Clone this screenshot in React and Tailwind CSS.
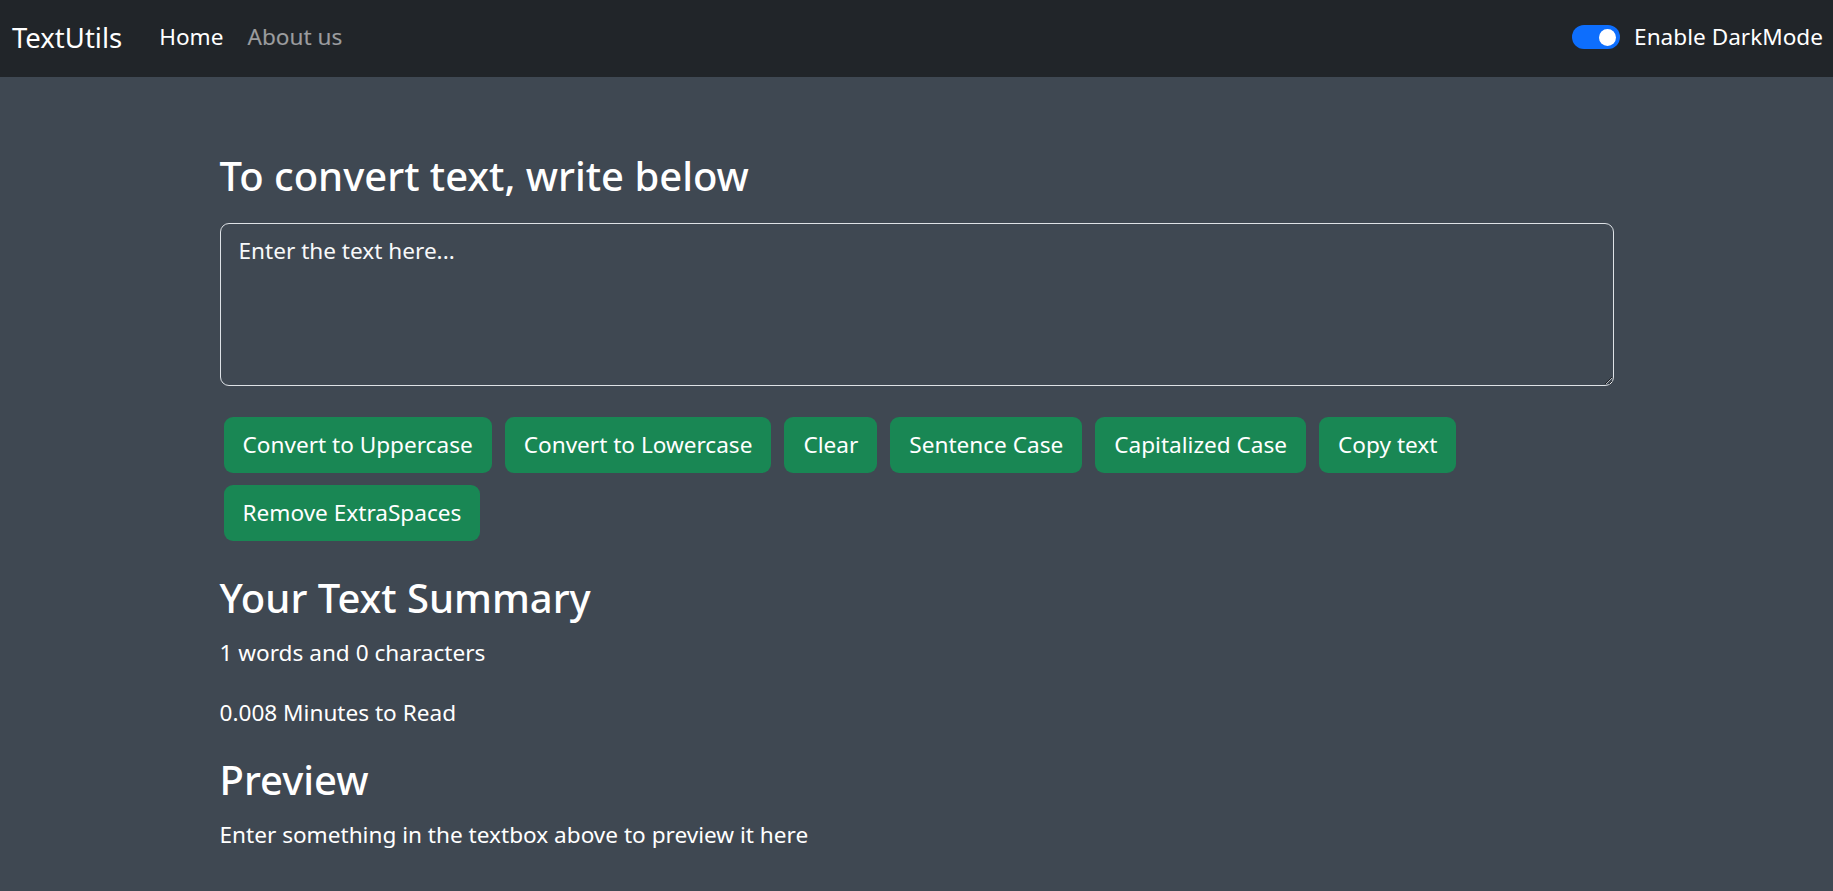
import { useState } from "react";

const font = "font-['Noto_Sans','Open_Sans',sans-serif]";

const Navbar = () => {
  return (
    <nav className="h-[77px] bg-[#212529] flex items-center justify-between pl-[12px] pr-[10px] pb-[3px]">
      <div className="flex items-center">
        <a className="text-[27.5px] leading-[45px] text-white mr-[25px]">TextUtils</a>
        <ul className="flex items-center">
          <li className="px-[12px] text-[22.6px] leading-[36px] text-white">Home</li>
          <li className="px-[12px] text-[22.6px] leading-[36px] text-white/55">About us</li>
        </ul>
      </div>
      <div className="flex items-center gap-[14px]">
        <div className="w-[48px] h-[24px] rounded-full bg-[#0d6efd] flex items-center justify-end pr-[4px]">
          <div className="w-[17px] h-[17px] rounded-full bg-white"></div>
        </div>
        <label className="text-[22.6px] leading-[36px] text-white">Enable DarkMode</label>
      </div>
    </nav>
  );
};

const buttons = [
  "Convert to Uppercase",
  "Convert to Lowercase",
  "Clear",
  "Sentence Case",
  "Capitalized Case",
  "Copy text",
  "Remove ExtraSpaces",
];

const App = () => {
  const [text, setText] = useState("");
  const words = text.split(" ").length;

  return (
    <div className={`min-h-screen bg-[#3f4852] ${font}`}>
      <Navbar />
      <div className="w-[1394px] mx-auto pt-[74px] text-white">
        <h3 className="text-[40px] leading-[50px] font-medium mb-[22px]">To convert text, write below</h3>
        <textarea
          value={text}
          onChange={(e) => setText(e.target.value)}
          placeholder="Enter the text here..."
          className="block w-full h-[163px] bg-[#3f4852] border border-[#dee2e6] rounded-[9px] px-[18px] py-[9px] text-[22.6px] leading-[36px] text-white placeholder:text-[#f8f9fa] outline-none"
        ></textarea>
        <div className="flex flex-wrap gap-x-[13px] gap-y-[12px] pl-[4px] mt-[31px]">
          {buttons.map((b) => (
            <button
              key={b}
              className="h-[56px] px-[19px] bg-[#198754] rounded-[9px] text-[22.6px] leading-[36px] text-white"
            >
              {b}
            </button>
          ))}
        </div>
        <div className="mt-[32px]">
          <h2 className="text-[40px] leading-[50px] font-medium mb-[12px]">Your Text Summary</h2>
          <p className="text-[22.6px] leading-[36px] mb-[24px]">
            {words} words and {text.length} characters
          </p>
          <p className="text-[22.6px] leading-[36px] mb-[24px]">{0.008 * words} Minutes to Read</p>
          <h2 className="text-[40px] leading-[50px] font-medium mb-[12px]">Preview</h2>
          <p className="text-[22.6px] leading-[36px] pb-[35px]">
            {text.length > 0 ? text : "Enter something in the textbox above to preview it here"}
          </p>
        </div>
      </div>
    </div>
  );
};

export default App;
